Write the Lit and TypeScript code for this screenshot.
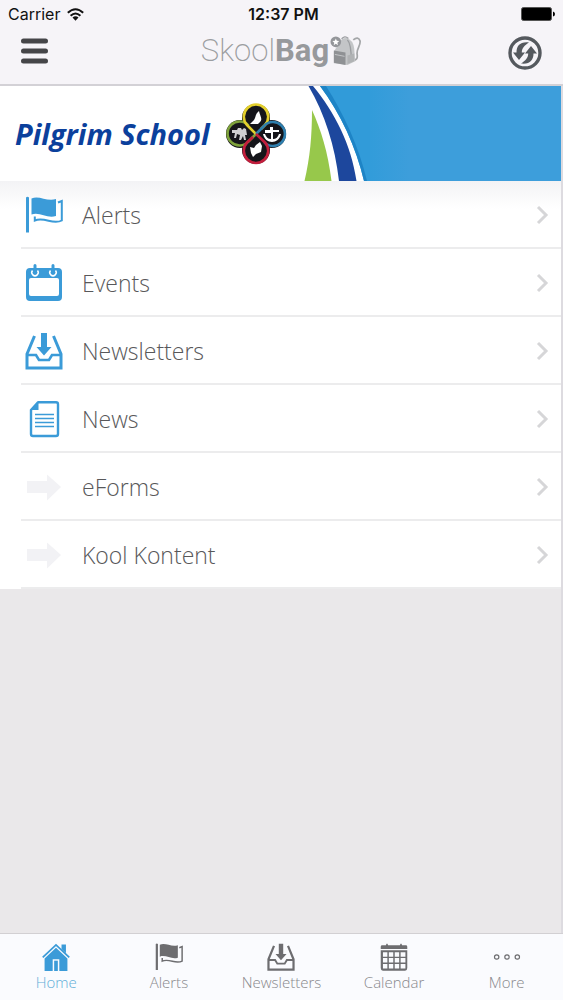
import { LitElement, html, css, svg, TemplateResult } from "lit";
import { customElement, property, state } from "lit/decorators.js";

const flag = svg`
  <path d="M1 1.5Q2.5 0 4 1.5V36.5H1Z" fill="currentColor"/>
  <path d="M6.5 2.5C14-1 22 6 31 3V20C22 23 15 15.5 6.5 18.5Z" fill="currentColor"/>
  <path d="M33 6.5L36.800 5V24.500C28 29.500 20 20.500 9.800 24.500V20.500" fill="none" stroke="currentColor" stroke-width="2"/>`;

const inbox = svg`
  <path d="M9.5 4L2 22V36H36V22L28.5 4" fill="none" stroke="currentColor" stroke-width="3"/>
  <path d="M2 23H11L14 28H24L27 23H36" fill="none" stroke="currentColor" stroke-width="2.6"/>
  <path d="M16 1H22V15H26.5L19 23.5L11.5 15H16Z" fill="currentColor"/>`;

const arrow = svg`<path d="M2 13H22V6.5L36 19L22 32.5V25H2Z" fill="#f2f2f5"/>`;

const icons: Record<string, TemplateResult> = {
  flag,
  inbox,
  arrow,
  events: svg`
    <path fill-rule="evenodd" d="M5 4H33Q37 4 37 8V33Q37 37 33 37H5Q1 37 1 33V8Q1 4 5 4ZM6 14Q4 14 4 16V30Q4 32 6 32H32Q34 32 34 30V16Q34 14 32 14Z" fill="currentColor"/>
    <g fill="none" stroke="#fff" stroke-width="1.5"><path d="M7.5 6.5A3.2 3.2 0 1 0 12.5 6.5"/><path d="M25.5 6.5A3.2 3.2 0 1 0 30.5 6.5"/></g>
    <path d="M10 1.5V8M28 1.5V8" stroke="currentColor" stroke-width="3" stroke-linecap="round"/>`,
  news: svg`
    <path d="M13 2.2H31Q33 2.2 33 4.2V34Q33 36 31 36H8Q6 36 6 34V10Z" fill="none" stroke="currentColor" stroke-width="2.4" stroke-linejoin="round"/>
    <path d="M13.5 2V10H5.5Z" fill="currentColor"/>
    <path d="M10 14.5H29M10 18.500H29M10 22.500H29M10 26.500H29" stroke="currentColor" stroke-width="1.3"/>`,
  home: svg`
    <path d="M26.5 2H32.5V14L26.5 8Z" fill="currentColor"/>
    <path d="M1 19.5L19 2.5L37 19.5" fill="none" stroke="currentColor" stroke-width="2.4"/>
    <path fill-rule="evenodd" d="M19 6.500L34.500 21V38H3.500V21ZM14.5 38H23.5V22H14.500Z" fill="currentColor"/>
    <path d="M16.5 24H21.5V38H16.5Z" fill="currentColor"/>`,
  calendar: svg`
    <path d="M3 3H8Q9.500-1.500 11 3H27Q28.500-1.500 30 3H35Q37 3 37 5V8H1V5Q1 3 3 3Z" fill="currentColor"/>
    <path fill-rule="evenodd" d="M1 10H37V34Q37 37.5 34 37.5H4Q1 37.5 1 34ZM4 12.5V18.5H10V12.5ZM12 12.5V18.5H18V12.5ZM20 12.5V18.5H26V12.5ZM28 12.5V18.5H34.5V12.5ZM4 20.5V26.5H10V20.5ZM12 20.5V26.5H18V20.5ZM20 20.5V26.5H26V20.5ZM28 20.5V26.5H34.5V20.5ZM4 28.5V34.5H10V28.5ZM12 28.5V34.5H18V28.5ZM20 28.5V34.5H26V28.5ZM28 28.5V34.5H34.5V28.5Z" fill="currentColor"/>`,
  more: svg`
    <g fill="none" stroke="currentColor" stroke-width="1.6"><circle cx="5" cy="19" r="3"/><circle cx="19" cy="19" r="3"/><circle cx="33" cy="19" r="3"/></g>`,
};

@customElement("sb-icon")
class SbIcon extends LitElement {
  @property() name = "flag";
  static styles = css`
    :host { display: block; }
    svg { display: block; width: 100%; height: 100%; overflow: visible; }
  `;
  render() {
    return html`<svg viewBox="0 0 38 38" aria-hidden="true">${icons[this.name]}</svg>`;
  }
}

@customElement("school-banner")
class SchoolBanner extends LitElement {
  static styles = css`
    :host { display: flex; height: 95px; background: #fff; }
    .name {
      display: flex;
      align-items: center;
      justify-content: space-between;
      width: 290px;
      padding: 0 3px 0 15px;
      box-sizing: border-box;
    }
    h1 {
      margin: 0;
      font: italic 700 29px/40px "Open Sans", sans-serif;
      color: #0b409c;
      white-space: nowrap;
    }
    .crest { width: 62px; height: 62px; flex: none; }
    .swoosh { width: 80px; height: 95px; flex: none; }
    .sky { flex: 1; background: linear-gradient(90deg, #329cda, #3d9edb 40px); }
  `;
  render() {
    return html`
      <div class="name">
        <h1>Pilgrim School</h1>
        <svg class="crest" viewBox="0 0 62 62" aria-hidden="true">
          <g fill="#15151a">
            <circle cx="31" cy="15" r="14"/><circle cx="15" cy="31" r="14"/>
            <circle cx="47" cy="31" r="14"/><circle cx="31" cy="47" r="14"/>
            <path d="M20 20H42V42H20Z"/>
          </g>
          <g fill="none" stroke-width="2.6">
            <path stroke="#7fa33c" d="M31 31L23.5 38.5A12 12 0 1 1 23.5 22.5"/>
            <path stroke="#e3cf2c" d="M31 31L22 22A12.2 12.2 0 1 1 40 22L36 26"/>
            <path stroke="#2f7fae" d="M31 31L39 23A12 12 0 1 1 39 39"/>
            <path stroke="#c21e3c" d="M31 31L40 39.5A12.2 12.2 0 1 1 22 39.5L28 34"/>
          </g>
          <g fill="#fff">
            <path d="M34 8C30 11 31 14 29 17L25 21H33L35 19C38 16 35 13 34 8Z"/>
            <path d="M25 44L29 45L31 42L35 39L37 43L36 49L31 51L28 54L26 50Z"/>
            <path d="M7 27H12L13 25H16L17 27L19 25L21 26L22 32H20L21 37H19L18 33L16 37H14L15 32L12 31L11 35H9L10 30H7Z" opacity=".8"/>
            <path d="M40 27H45V24H48V27H54V29H48V36C51 36 53 34 54 31H56C55 36 51 39 47 39C43 39 39 36 38 31H40C41 34 43 36 46 36V30H40Z"/>
          </g>
        </svg>
      </div>
      <svg class="swoosh" viewBox="0 0 80 95" aria-hidden="true">
        <path d="M30 0C51 28 66 61 74 95H80V0Z" fill="#319bd9"/>
        <path d="M30 0C51 28 66 61 74 95H77C69 61 54 28 36 0Z" fill="#1e84c6"/>
        <path d="M18.5 0H23C45 27 61 58 66.5 95H49C45 60 35 28 18.5 0Z" fill="#1d479d"/>
        <path d="M22 24C31 44 38 66 41.5 95H14.5C20 72 22 50 22 24Z" fill="#97c84b"/>
      </svg>
      <div class="sky"></div>
    `;
  }
}

@customElement("app-root")
class AppRoot extends LitElement {
  @state() private tab = "Home";

  private rows = [
    ["Alerts", "flag"],
    ["Events", "events"],
    ["Newsletters", "inbox"],
    ["News", "news"],
    ["eForms", "arrow"],
    ["Kool Kontent", "arrow"],
  ];
  private tabs = [
    ["Home", "home"],
    ["Alerts", "flag"],
    ["Newsletters", "inbox"],
    ["Calendar", "calendar"],
    ["More", "more"],
  ];

  static styles = css`
    :host {
      display: flex;
      flex-direction: column;
      min-height: 100vh;
      background: #eae8ea;
      font-family: "Open Sans", sans-serif;
    }
    button { border: 0; padding: 0; background: none; font: inherit; cursor: pointer; }
    svg { display: block; }
    .edge { flex: 1; border-right: 2px solid #dddbe0; }
    header { background: #f6f4f8; border-bottom: 2px solid #d3d1d6; }
    .status {
      display: grid;
      grid-template-columns: 1fr auto 1fr;
      align-items: center;
      height: 28px;
      padding: 0 8px;
      font: 400 16px/28px Inter, sans-serif;
      color: #111;
    }
    .carrier { display: flex; align-items: center; gap: 7px; }
    .time { font-weight: 600; padding-left: 4px; }
    .battery { justify-self: end; }
    .bar {
      display: grid;
      grid-template-columns: 1fr auto 1fr;
      align-items: center;
      height: 56px;
      padding: 0 21px 10px 20px;
      box-sizing: border-box;
    }
    .menu { justify-self: start; }
    .refresh { justify-self: end; padding-top: 4px; }
    .brand {
      display: flex;
      align-items: center;
      gap: 1px;
      font: 200 31px/40px Roboto, sans-serif;
      color: #9b9da0;
    }
    .brand b { font-weight: 700; color: #97999c; }
    .list { list-style: none; margin: 0; padding: 0; background: linear-gradient(#f3f3f5, #fff 28px); }
    .row {
      display: flex;
      align-items: center;
      box-sizing: border-box;
      height: 68px;
      margin-left: 21px;
      padding: 2px 12px 0 4px;
      border-bottom: 2px solid #ececed;
      color: #58585a;
      text-decoration: none;
      font-size: 23px;
      line-height: 32px;
      font-weight: 300;
    }
    .row sb-icon { width: 38px; height: 38px; margin-right: 19px; color: #3b9bd8; }
    .label { flex: 1; }
    .tabs {
      display: grid;
      grid-template-columns: repeat(5, 1fr);
      height: 66px;
      border-top: 1px solid #d2d0d3;
      background: #fafbfe;
    }
    .tab {
      display: flex;
      flex-direction: column;
      align-items: center;
      padding-top: 9px;
      color: #6d6d70;
      font-weight: 300;
      font-size: 15px;
      line-height: 20px;
    }
    .tab sb-icon { width: 28px; height: 28px; margin-bottom: 1px; }
    .tab span { color: #88888c; }
    .tab.on { color: #3b9bd8; }
    .tab.on span { color: #62aed8; }
  `;

  render() {
    return html`
      <header>
        <div class="status">
          <div class="carrier">
            <span>Carrier</span>
            <svg width="17" height="13" viewBox="0 0 17 13" aria-label="Wi-Fi">
              <g fill="none" stroke="#111" stroke-width="2"><path d="M.8 4.8Q8.5-2.2 16.2 4.8"/><path d="M3.6 7.7Q8.5 3.2 13.4 7.7"/></g>
              <path d="M5.5 9.6Q8.5 7 11.5 9.6L8.5 12.8Z" fill="#111"/>
            </svg>
          </div>
          <div class="time">12:37 PM</div>
          <svg class="battery" width="34" height="14" viewBox="0 0 34 14" aria-label="Battery full">
            <rect x=".5" y=".5" width="30" height="13" rx="2" fill="#000" stroke="#555"/>
            <path d="M32 4.5Q34 5 34 7T32 9.5Z" fill="#000"/>
          </svg>
        </div>
        <div class="bar">
          <button class="menu" aria-label="Menu">
            <svg width="28" height="26" viewBox="0 0 28 26">
              <path d="M3.5 3H25.5M3.5 13H25.5M3.5 23H25.5" stroke="#454548" stroke-width="5" stroke-linecap="round"/>
            </svg>
          </button>
          <div class="brand">
            <span>Skool<b>Bag</b></span>
            <svg width="31" height="33" viewBox="0 0 32 34" aria-hidden="true">
              <path d="M24 5Q29 1 31 6C32 11 27 14 28 20Q29 26 24 26" fill="none" stroke="#a4a6a8" stroke-width="1.8"/>
              <path d="M9 9Q11 3 17 3Q24 5 25 14L26 27L18 31L4 29V17Z" fill="#c3c5c7"/>
              <path d="M12 4Q15 0 19 3.5M18 5Q22 9 22 27" fill="none" stroke="#9b9da0" stroke-width="1.4"/>
              <path d="M4 16L16 18V31L4 28.5Z" fill="#8f9194"/>
              <path d="M5 20L15 22" stroke="#c3c5c7" stroke-width="1"/>
              <path d="M18 21L25 19V27L18 30Z" fill="#b0b2b4"/>
              <circle cx="6" cy="7" r="5.5" fill="#94969a"/>
              <path d="M6 3.5L7 6L9.5 6.2L7.6 7.9L8.2 10.5L6 9.1L3.8 10.5L4.4 7.9L2.5 6.2L5 6Z" fill="#fff"/>
            </svg>
          </div>
          <button class="refresh" aria-label="Refresh">
            <svg width="34" height="34" viewBox="0 0 34 34">
              <circle cx="17" cy="17" r="15" fill="none" stroke="#55595e" stroke-width="3.4"/>
              <path d="M21 6.500C12 5.500 8.500 10 8.500 16.500H5L11 24L17 16.500H13.800C13.800 12 16.500 9.500 21 6.500Z" fill="#55595e"/>
              <path d="M13 27.500C22 28.500 25.500 24 25.500 17.500H29L23 10L17 17.500H20.200C20.200 22 17.500 24.500 13 27.500Z" fill="#55595e"/>
            </svg>
          </button>
        </div>
      </header>
      <main class="edge">
        <school-banner></school-banner>
        <ul class="list">
          ${this.rows.map(
            ([label, icon]) => html`<li>
              <a class="row" href="#">
                <sb-icon name=${icon}></sb-icon>
                <span class="label">${label}</span>
                <svg width="13" height="20" viewBox="0 0 13 20" aria-hidden="true">
                  <path d="M2 2L10 10L2 18" fill="none" stroke="#d6d6d8" stroke-width="3"/>
                </svg>
              </a>
            </li>`
          )}
        </ul>
      </main>
      <nav class="tabs">
        ${this.tabs.map(
          ([label, icon]) => html`<button
            class="tab ${this.tab === label ? "on" : ""}"
            @click=${() => (this.tab = label)}
          >
            <sb-icon name=${icon}></sb-icon>
            <span>${label}</span>
          </button>`
        )}
      </nav>
    `;
  }
}
